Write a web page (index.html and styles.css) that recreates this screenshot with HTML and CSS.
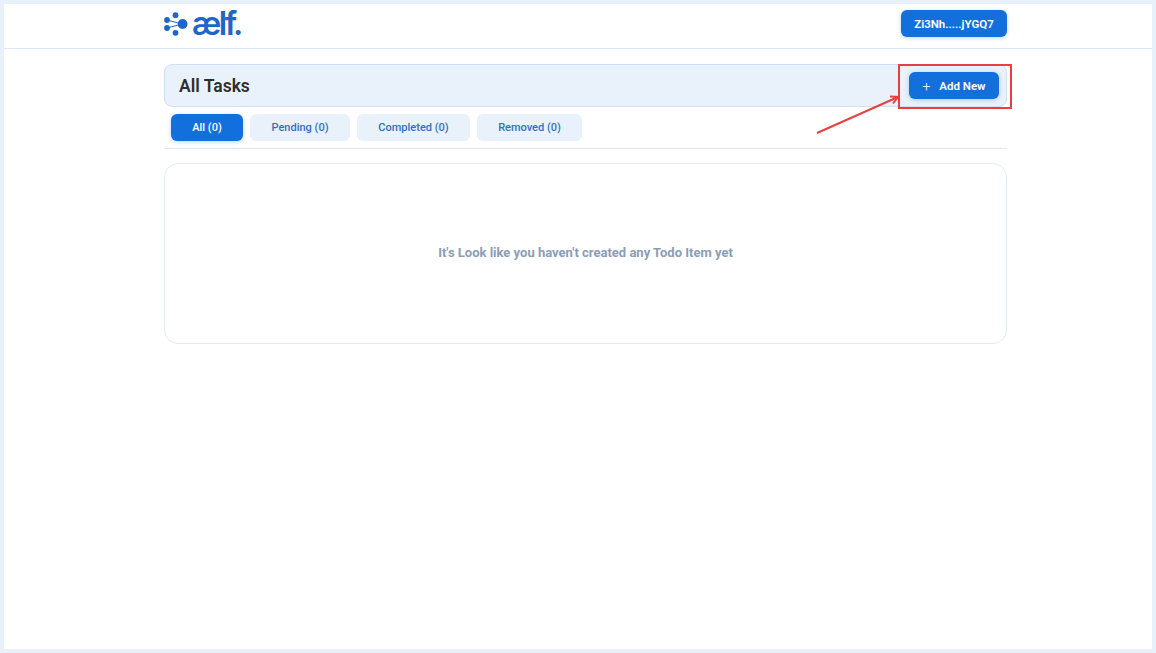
FILE: index.html
```html
<!DOCTYPE html>
<html lang="en">
<head>
  <meta charset="UTF-8">
  <meta name="viewport" content="width=device-width, initial-scale=1.0">
  <title>All Tasks</title>
  <link rel="stylesheet" href="styles.css">
</head>
<body>
  <div class="frame">
    <header class="header">
      <div class="header-inner">
        <a href="#" class="logo">
          <svg class="logo-mark" width="24" height="24" viewBox="0 0 24 24" fill="#1f66cc">
            <circle cx="11.5" cy="3.2" r="2.9"/>
            <circle cx="3" cy="8" r="2.9"/>
            <circle cx="3" cy="16" r="2.9"/>
            <circle cx="11.5" cy="20.8" r="2.9"/>
            <circle cx="18.6" cy="12" r="4.9"/>
            <path d="M3 8 L18 12 L3 16" fill="none" stroke="#1f66cc" stroke-width="1"/>
          </svg>
          <span class="logo-text">ælf.</span>
        </a>
        <button class="btn wallet-btn">Zi3Nh.....jYGQ7</button>
      </div>
    </header>

    <main class="content">
      <div class="title-bar">
        <h2>All Tasks</h2>
        <button class="btn add-btn"><span class="plus">+</span>Add New</button>
      </div>

      <div class="tabs">
        <button class="tab active">All (0)</button>
        <button class="tab tab-pending">Pending (0)</button>
        <button class="tab tab-completed">Completed (0)</button>
        <button class="tab tab-removed">Removed (0)</button>
      </div>

      <div class="empty-card">
        <p>It's Look like you haven't created any Todo Item yet</p>
      </div>
    </main>

    <!-- annotation drawn on top of the screenshot -->
    <div class="callout-box"></div>
    <svg class="callout-arrow" width="100" height="54" viewBox="0 0 100 54" fill="none" stroke="#ea3f3f">
      <path d="M2 50 L83 14" stroke-width="2"/>
      <path d="M75 13.5 L83 14 L78 20.5" stroke-width="2"/>
    </svg>
  </div>
</body>
</html>
```

FILE: styles.css
```css
* {
  box-sizing: border-box;
}
html, body {
  height: 100%;
}
body {
  margin: 0;
  font-family: Roboto, Arial, sans-serif;
  background-color: #ffffff;
  overflow: hidden;
}
.frame {
  position: relative;
  height: 653px;
  border: 4px solid #e8f0fa;
  background: #ffffff;
}
.header {
  height: 45px;
  border-bottom: 1px solid #dbe7f5;
}
.header-inner {
  width: 843px;
  margin-left: 160px;
  height: 39px;
  display: flex;
  align-items: center;
  justify-content: space-between;
}
.logo {
  display: flex;
  align-items: center;
  gap: 4px;
  text-decoration: none;
}
.logo-text {
  font-family: Inter, sans-serif;
  font-weight: 600;
  font-size: 32px;
  line-height: 32px;
  letter-spacing: -2.4px;
  color: #1f66cc;
}
.btn {
  border: none;
  border-radius: 6px;
  background-color: #126fdc;
  color: #ffffff;
  font-family: Roboto, Arial, sans-serif;
  font-weight: 600;
  font-size: 11.5px;
  box-shadow: 0 1px 4px rgba(18, 111, 220, 0.3);
}
.wallet-btn {
  width: 106px;
  height: 27px;
}
.add-btn {
  width: 90px;
  height: 27px;
  display: flex;
  align-items: center;
  justify-content: center;
}
.plus {
  font-weight: 300;
  font-size: 14px;
  margin-right: 9px;
}
.content {
  width: 843px;
  margin-left: 160px;
  padding-top: 15px;
}
.title-bar {
  height: 43px;
  display: flex;
  align-items: center;
  justify-content: space-between;
  padding: 0 7px 0 14px;
  background-color: #e9f1fb;
  border: 1px solid #cfe0f3;
  border-radius: 8px;
}
.title-bar h2 {
  margin: 0;
  font-size: 17.5px;
  font-weight: 600;
  color: #2e2e2e;
}
.tabs {
  display: flex;
  gap: 7px;
  margin-top: 7px;
  padding: 0 7px 7px;
  border-bottom: 1px solid #dbe7f5;
}
.tab {
  width: 72px;
  height: 27px;
  border: none;
  border-radius: 6px;
  background-color: #e9f1fb;
  color: #2f6fc9;
  font-family: Roboto, Arial, sans-serif;
  font-weight: 500;
  font-size: 11px;
}
.tab.active {
  background-color: #126fdc;
  color: #ffffff;
  box-shadow: 0 1px 4px rgba(18, 111, 220, 0.3);
}
.tab-pending {
  width: 100px;
}
.tab-completed {
  width: 113px;
}
.tab-removed {
  width: 105px;
}
.empty-card {
  height: 181px;
  margin-top: 14px;
  padding-bottom: 2px;
  display: flex;
  align-items: center;
  justify-content: center;
  border: 1px solid #e0ebf7;
  border-radius: 14px;
}
.empty-card p {
  margin: 0;
  font-size: 13px;
  font-weight: 700;
  color: #8a9db8;
}
.callout-box {
  position: absolute;
  left: 894px;
  top: 60px;
  width: 114px;
  height: 45px;
  border: 2px solid #ea3f3f;
}
.callout-arrow {
  position: absolute;
  left: 811px;
  top: 79px;
}
```
